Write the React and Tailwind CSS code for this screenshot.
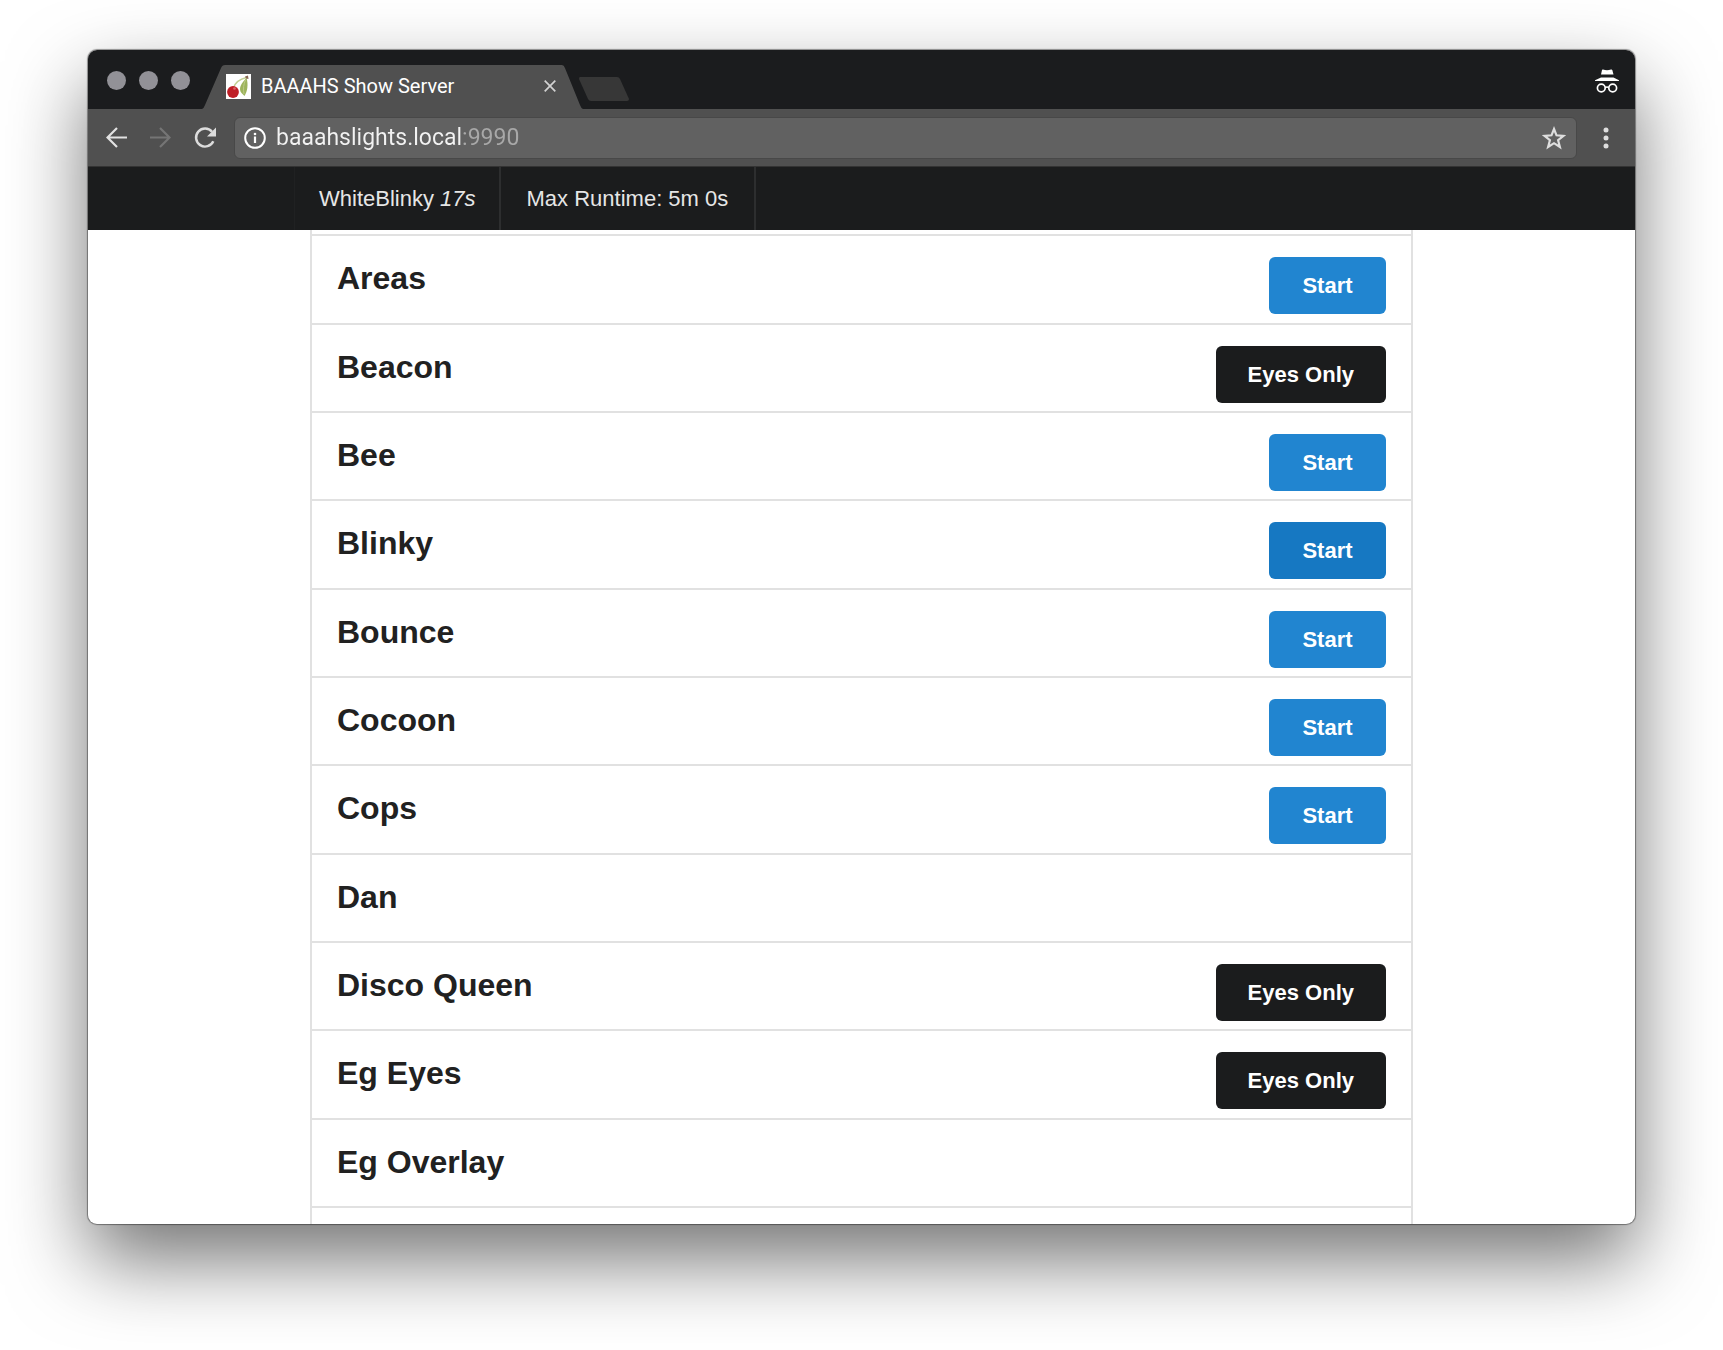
import React from 'react';

const shows = [
  { name: 'Areas', action: 'start' },
  { name: 'Beacon', action: 'eyes' },
  { name: 'Bee', action: 'start' },
  { name: 'Blinky', action: 'start', active: true },
  { name: 'Bounce', action: 'start' },
  { name: 'Cocoon', action: 'start' },
  { name: 'Cops', action: 'start' },
  { name: 'Dan' },
  { name: 'Disco Queen', action: 'eyes' },
  { name: 'Eg Eyes', action: 'eyes' },
  { name: 'Eg Overlay' },
];

function Favicon() {
  return (
    <svg viewBox="0 0 25 25" className="size-[25px] shrink-0" aria-hidden="true">
      <rect width="25" height="25" fill="#fff" />
      <path d="M20.500 3.500 C14 5 9 9 7.500 14" fill="none" stroke="#c3d193" strokeWidth="1.500" />
      <path d="M20.500 4 C15 9 12 15 15.500 19 L18.500 22 C21.500 17 22.500 10 20.500 4Z" fill="#9db35c" />
      <path d="M19.500 6 C17.500 10 17 15 18 20" fill="none" stroke="#bccb85" strokeWidth="1" />
      <path d="M19 2.500 L22 1.500 L22.500 5 L20 4.500Z" fill="#8a6a55" />
      <circle cx="7" cy="18" r="5.900" fill="#bf1e26" />
      <circle cx="8.500" cy="14.500" r="1.300" fill="#d8666a" />
    </svg>
  );
}

function TabStrip() {
  return (
    <div className="flex h-[59px] items-end bg-[#1b1c1e] pr-4 pl-[19px]">
      <div className="flex h-full items-center gap-[13px] pt-0.5 pr-3">
        <button aria-label="Close window" className="size-[19px] rounded-full bg-[#929197]" />
        <button aria-label="Minimize window" className="size-[19px] rounded-full bg-[#929197]" />
        <button aria-label="Zoom window" className="size-[19px] rounded-full bg-[#929197]" />
      </div>
      <div className="relative flex h-11 w-[381px] items-center pr-[27px] pb-0.5 pl-6">
        <svg viewBox="0 0 380 44" preserveAspectRatio="none" className="absolute inset-0 size-full" aria-hidden="true">
          <path d="M0 44 Q2 43 3 40 L19 3 Q20 0 23 0 H359 Q361 0 362 3 L377 40 Q378 43 380 44Z" fill="#505050" />
        </svg>
        <div className="relative flex w-full items-center">
          <Favicon />
          <span className="ml-2.5 flex-1 whitespace-nowrap font-['Roboto',sans-serif] text-[20px] text-white">BAAAHS Show Server</span>
          <button aria-label="Close tab" className="flex size-3 items-center justify-center text-[#d2d2d2]">
            <svg viewBox="0 0 12 12" className="size-3" aria-hidden="true">
              <path d="M.7 .7 L11.300 11.300 M11.300 .7 L.7 11.300" stroke="currentColor" strokeWidth="1.700" />
            </svg>
          </button>
        </div>
      </div>
      <button aria-label="New tab" className="mb-2 -ml-1">
        <svg viewBox="0 0 50 24" className="h-6 w-[50px]" aria-hidden="true">
          <path d="M1 0 H38 Q40 0 41 2 L50 22 Q50 24 48 24 H12 Q10 24 9 22 L0 2 Q0 0 1 0Z" fill="#373737" />
        </svg>
      </button>
      <svg viewBox="0 0 24 24" className="mb-4 ml-auto size-6" aria-label="Incognito" role="img">
        <path d="M8 .5 Q12 2 16 .5 Q17 .2 17.300 1 L18.500 5.500 H6 L7 1 Q7.300 .2 8 .5Z M6 8.500 H18.500 L24 11.300 V12 H0 V11.300Z" fill="#fff" />
        <g fill="none" stroke="#fff" strokeWidth="1.700">
          <circle cx="6.300" cy="19" r="3.900" />
          <circle cx="17.700" cy="19" r="3.900" />
          <path d="M10.200 18.500 Q12 17.500 13.800 18.500" />
        </g>
      </svg>
    </div>
  );
}

function Toolbar() {
  return (
    <div className="flex h-[58px] items-center border-b border-[#333] bg-[#505050] pr-[26px] pl-[18px]">
      <button aria-label="Back" className="text-[#e2e2e2]">
        <svg viewBox="0 0 21 21" className="size-[21px]" fill="none" stroke="currentColor" strokeWidth="2.200" aria-hidden="true">
          <path d="M21 10.500 H2 M11 1 L1.500 10.500 L11 20" />
        </svg>
      </button>
      <button aria-label="Forward" className="ml-[23px] text-[#757575]">
        <svg viewBox="0 0 21 21" className="size-[21px]" fill="none" stroke="currentColor" strokeWidth="2.200" aria-hidden="true">
          <path d="M0 10.500 H19 M10 1 L19.500 10.500 L10 20" />
        </svg>
      </button>
      <button aria-label="Reload" className="ml-[23px] text-[#dcdcdc]">
        <svg viewBox="0 0 22 22" className="size-[22px]" aria-hidden="true">
          <path d="M18 4.800 A9 9 0 1 0 19.300 14.200" fill="none" stroke="currentColor" strokeWidth="2.400" />
          <path d="M22 .5 V9.500 H13Z" fill="currentColor" />
        </svg>
      </button>
      <form className="ml-[18px] flex h-[42px] flex-1 items-center rounded-md border border-[#484848] bg-[#616161] pr-2.5 pl-[9px]" onSubmit={(e) => e.preventDefault()}>
        <svg viewBox="0 0 22 22" className="size-[22px]" aria-hidden="true">
          <circle cx="11" cy="11" r="9.800" fill="none" stroke="#fff" strokeWidth="2" />
          <path d="M11 9.500 V16" stroke="#fff" strokeWidth="2.200" />
          <circle cx="11" cy="7" r="1.300" fill="#fff" />
        </svg>
        <input
          type="text"
          aria-label="Address"
          defaultValue="baaahslights.local:9990"
          className="ml-2.5 h-8 min-w-0 flex-1 bg-[linear-gradient(to_right,#f2f2f2_186px,#a8a8a8_186px)] bg-clip-text pt-0.5 font-['Roboto',sans-serif] text-[23px] text-transparent outline-none"
        />
        <button type="button" aria-label="Bookmark" className="text-[#dedede]">
          <svg viewBox="0 0 24 24" className="size-6" aria-hidden="true">
            <path d="M12 3 L14.500 9.300 L21.500 9.800 L16.100 14.200 L17.900 21 L12 17.200 L6.100 21 L7.900 14.200 L2.500 9.800 L9.500 9.300Z" fill="none" stroke="currentColor" strokeWidth="2.200" />
          </svg>
        </button>
      </form>
      <button aria-label="Menu" className="ml-[26px]">
        <svg viewBox="0 0 6 22" className="h-[22px] w-1.5" fill="#dedede" aria-hidden="true">
          <circle cx="3" cy="3" r="2.500" />
          <circle cx="3" cy="11" r="2.500" />
          <circle cx="3" cy="19" r="2.500" />
        </svg>
      </button>
    </div>
  );
}

function StatusBar() {
  return (
    <nav className="bg-[#1b1c1d] text-[22px] text-[#e6e6e6]">
      <div className="mx-auto flex h-[63px] max-w-[1135px]">
        <a href="#current" className="flex items-center border-x border-r-2 border-l-[#202122] border-r-[#2d2e2f] pr-[23px] pl-6">
          <span className="whitespace-pre">WhiteBlinky <i>17s</i></span>
        </a>
        <a href="#runtime" className="flex items-center border-r-2 border-[#2d2e2f] px-[26px]">Max Runtime: 5m 0s</a>
      </div>
    </nav>
  );
}

function ShowRow({ show }) {
  return (
    <li className="flex h-[88px] items-start justify-between border-t-2 border-[#e1e1e1] px-[25px] pt-[21px] nth-[3n+1]:h-[89px]">
      <h2 className="pt-[3px] text-[32px] leading-9 font-bold text-[#212121]">{show.name}</h2>
      {show.action === 'start' && (
        <button className={show.active ? 'h-[57px] min-w-[117px] rounded-md bg-[#1678c2] px-8 text-[22px] font-bold text-white' : 'h-[57px] min-w-[117px] rounded-md bg-[#2185d0] px-8 text-[22px] font-bold text-white'}>
          Start
        </button>
      )}
      {show.action === 'eyes' && (
        <button className="h-[57px] rounded-md bg-[#1b1c1d] px-8 text-[22px] font-bold text-white">Eyes Only</button>
      )}
    </li>
  );
}

export default function App() {
  return (
    <div className="min-h-screen bg-white px-[88px] pt-[50px] pb-[125px] font-['Liberation_Sans',Arial,sans-serif]">
      <div className="overflow-hidden rounded-[9px] bg-white shadow-[0_0_1px_1px_rgba(0,0,0,0.4),0_36px_80px_rgba(0,0,0,0.55)]">
        <TabStrip />
        <Toolbar />
        <StatusBar />
        <main>
          <ul className="mx-auto max-w-[1103px] border-x-2 border-[#e1e1e1] pt-1">
            {shows.map((show) => (
              <ShowRow key={show.name} show={show} />
            ))}
            <li className="h-[18px] border-t-2 border-[#e1e1e1]" />
          </ul>
        </main>
      </div>
    </div>
  );
}
